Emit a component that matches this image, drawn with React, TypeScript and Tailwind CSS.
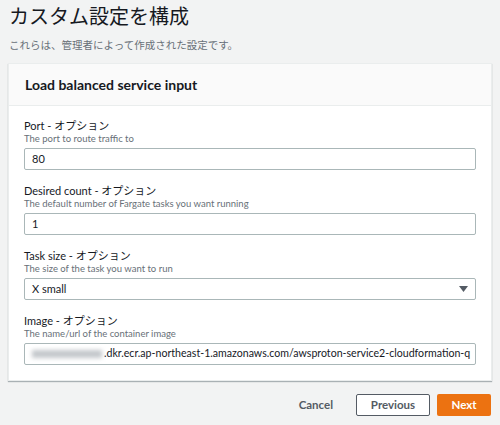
import React from "react";

const font = { fontFamily: 'Lato, "Noto Sans CJK JP", sans-serif' };

function Field({ label, desc, children }: { label: string; desc: string; children: React.ReactNode }) {
  return (
    <div className="flex flex-col">
      <div className="text-[11px] leading-[14px] text-[#16191f]">{label}</div>
      <div className="text-[9.5px] leading-[12px] text-[#687078]">{desc}</div>
      <div className="mt-[3px]">{children}</div>
    </div>
  );
}

function TextInput({ value, blurred }: { value: string; blurred?: boolean }) {
  return (
    <div
      className={`h-[22px] border border-[#aab7b8] rounded-[2px] bg-white flex items-center px-[7px] text-[#16191f] overflow-hidden whitespace-nowrap ${
        blurred ? "text-[10.6px]" : "text-[11px]"
      }`}
    >
      {blurred && <span className="inline-block shrink-0 w-[70px] h-[8px] bg-[#c4c8cc] blur-[2px] mr-[2px]" />}
      {value}
    </div>
  );
}

export default function App() {
  return (
    <div className="w-[500px] h-[425px] bg-[#f2f3f3] overflow-hidden" style={font}>
      <div className="px-[9px] pt-[2px]">
        <h1 className="text-[20px] leading-[28px] text-[#16191f]">カスタム設定を構成</h1>
        <p className="text-[10.5px] leading-[14px] mt-[8px] text-[#687078]">これらは、管理者によって作成された設定です。</p>
      </div>
      <div className="mx-[8px] mt-[11px] bg-white border border-[#eaeded] shadow-[0_1px_1px_0_rgba(0,28,36,0.3)]">
        <div className="h-[42px] bg-[#fafafa] border-b border-[#eaeded] flex items-center px-[16px]">
          <h2 className="text-[14px] font-bold text-[#16191f]">Load balanced service input</h2>
        </div>
        <div className="px-[15px] pt-[13px] pb-[15px] flex flex-col gap-[14px]">
          <Field label="Port - オプション" desc="The port to route traffic to">
            <TextInput value="80" />
          </Field>
          <Field label="Desired count - オプション" desc="The default number of Fargate tasks you want running">
            <TextInput value="1" />
          </Field>
          <Field label="Task size - オプション" desc="The size of the task you want to run">
            <div className="h-[22px] border border-[#aab7b8] rounded-[2px] bg-white flex items-center justify-between px-[7px] text-[11px] text-[#16191f]">
              <span>X small</span>
              <svg width="9" height="6" viewBox="0 0 9 6"><path d="M0 0h9L4.5 6z" fill="#545b64" /></svg>
            </div>
          </Field>
          <Field label="Image - オプション" desc="The name/url of the container image">
            <TextInput blurred value=".dkr.ecr.ap-northeast-1.amazonaws.com/awsproton-service2-cloudformation-q" />
          </Field>
        </div>
      </div>
      <div className="flex justify-end items-center mt-[13px] pr-[9px] text-[11.5px] font-bold">
        <button className="h-[22px] text-[#545b64] mr-[23px]">Cancel</button>
        <button className="h-[22px] w-[74px] border border-[#545b64] rounded-[2px] bg-white text-[#545b64] mr-[7px]">Previous</button>
        <button className="h-[22px] w-[54px] rounded-[2px] bg-[#ec7211] text-white">Next</button>
      </div>
    </div>
  );
}
